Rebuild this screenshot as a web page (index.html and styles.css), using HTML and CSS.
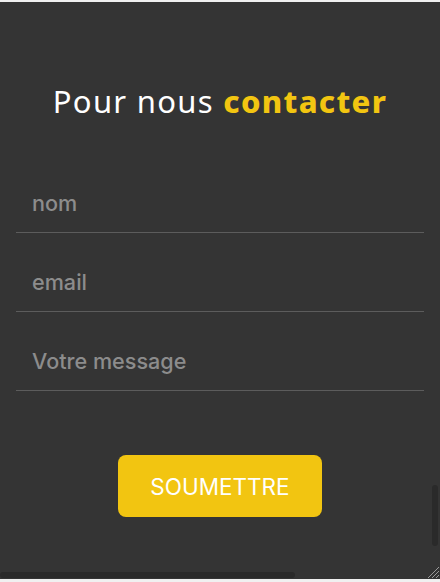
FILE: index.html
```html
<!DOCTYPE html>
<html lang="fr">
<head>
<meta charset="utf-8">
<title>Contact</title>
<link rel="stylesheet" href="styles.css">
</head>
<body>
<div class="panel">
  <h2 class="title">Pour nous <strong>contacter</strong></h2>
  <form class="form">
    <input class="field" type="text" placeholder="nom">
    <input class="field" type="email" placeholder="email">
    <input class="field" type="text" placeholder="Votre message">
    <div class="actions">
      <button class="submit" type="button">SOUMETTRE</button>
    </div>
  </form>
  <div class="vthumb"></div>
  <div class="hthumb"></div>
  <svg class="grip" width="14" height="14" viewBox="0 0 14 14">
    <path d="M13 2 L2 13 M13 6 L6 13 M13 10 L10 13" stroke="#9a9a9a" stroke-width="1"/>
  </svg>
</div>
</body>
</html>
```
FILE: styles.css
```css
html, body {
  margin: 0;
  padding: 0;
  background: #f0f0f0;
}
.panel {
  position: relative;
  margin-top: 2px;
  height: 577px;
  background: #343434;
  overflow: hidden;
  font-family: Inter, "Liberation Sans", sans-serif;
}
.title {
  margin: 0;
  padding-top: 79px;
  text-align: center;
  font-family: "Noto Sans", sans-serif;
  font-weight: 400;
  font-size: 31px;
  line-height: 40px;
  letter-spacing: 1.3px;
  color: #ffffff;
}
.title strong {
  font-weight: 800;
  color: #f2c511;
}
.form {
  display: flex;
  flex-direction: column;
  padding: 0 16px;
  margin-top: 33px;
}
.field {
  display: block;
  box-sizing: border-box;
  width: 100%;
  height: 79px;
  margin: 0;
  padding: 20px 16px 0;
  border: 0;
  border-bottom: 1px solid #5c5c5c;
  background: transparent;
  outline: none;
  font-family: Inter, "Liberation Sans", sans-serif;
  font-size: 21.6px;
  font-weight: 500;
  color: #cccccc;
}
.field::placeholder {
  color: #8c8c8c;
}
.actions {
  display: flex;
  justify-content: center;
  padding-top: 64px;
}
.submit {
  width: 204px;
  height: 62px;
  border: 0;
  border-radius: 8px;
  background: #f2c511;
  color: #ffffff;
  font-family: Inter, "Liberation Sans", sans-serif;
  font-size: 22.5px;
  font-weight: 400;
  cursor: pointer;
}
.vthumb {
  position: absolute;
  right: 2px;
  top: 483px;
  width: 6px;
  height: 61px;
  border-radius: 3px;
  background: #2a2a2a;
}
.hthumb {
  position: absolute;
  left: 0;
  bottom: 1px;
  width: 295px;
  height: 6px;
  border-radius: 3px;
  background: #2a2a2a;
}
.grip {
  position: absolute;
  right: 0;
  bottom: 0;
}
```
